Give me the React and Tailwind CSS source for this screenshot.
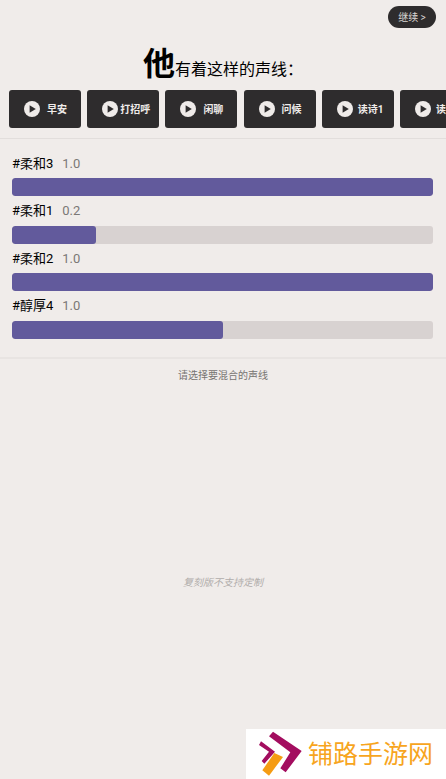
const voices = [
  { name: "早安", gap: "gap-[7px]" },
  { name: "打招呼", gap: "gap-[2px]" },
  { name: "闲聊", gap: "gap-[7px]" },
  { name: "问候", gap: "gap-[7px]" },
  { name: "读诗1", gap: "gap-[5px]" },
  { name: "读诗2", gap: "gap-[5px]" },
];

const mixes = [
  { name: "#柔和3", value: "1.0", fill: "w-full" },
  { name: "#柔和1", value: "0.2", fill: "w-[20%]" },
  { name: "#柔和2", value: "1.0", fill: "w-full" },
  { name: "#醇厚4", value: "1.0", fill: "w-1/2" },
];

function PlayIcon() {
  return (
    <svg width="16" height="16" viewBox="0 0 16 16" className="shrink-0">
      <circle cx="8" cy="8" r="8" fill="#efebe9" />
      <path d="M5.6 4.2 L11.8 8 L5.6 11.8 Z" fill="#2e2c2d" />
    </svg>
  );
}

function VoiceButton({ voice }) {
  return (
    <div
      className={`w-[72px] h-[38px] shrink-0 flex items-center ${voice.gap} pl-[15px] bg-[#2e2c2d] rounded-[3px] text-[#efebe9] text-[10px] font-bold whitespace-nowrap overflow-hidden`}
    >
      <PlayIcon />
      <span>{voice.name}</span>
    </div>
  );
}

function MixRow({ mix }) {
  return (
    <div className="h-[47.6px]">
      <div className="h-[20px] flex items-center pl-[12px] gap-[9px] text-[13px] leading-none">
        <span className="text-black">{mix.name}</span>
        <span className="text-[#7b7876]">{mix.value}</span>
      </div>
      <div className="mt-[5px] ml-[12px] mr-[13px] h-[18px] bg-[#d8d2d1] rounded-[3px] overflow-hidden">
        <div className={`h-full ${mix.fill} bg-[#625a9c] rounded-[3px]`} />
      </div>
    </div>
  );
}

function Logo() {
  return (
    <svg width="50" height="50" viewBox="0 0 150 150" className="shrink-0">
      <path d="M42 22 L54 8 L140 66 L92 130 L76 118 L106 70 Z" fill="#a30d5f" />
      <path d="M12 48 L18 37 L60 68 L28 104 L20 96 L42 68 Z" fill="#a30d5f" />
      <path d="M22 124 L58 72 L84 84 L42 140 Z" fill="#f59c13" />
    </svg>
  );
}

export default function App() {
  return (
    <div
      className="relative w-[446px] h-[779px] overflow-hidden bg-[#f0ecea] flex flex-col"
      style={{ fontFamily: "Roboto, 'Noto Sans CJK SC', sans-serif" }}
    >
      <div className="h-[42px] pt-[6px] pr-[10px] flex justify-end">
        <div className="w-[48px] h-[22px] rounded-full bg-[#2e2c2d] text-[#d9d5d3] text-[10px] flex items-center justify-center">
          继续 &gt;
        </div>
      </div>

      <div className="h-[38px] flex items-end justify-center text-black leading-none">
        <span className="text-[32px] font-bold">他</span>
        <span className="text-[16px] pb-[2px]">有着这样的声线：</span>
      </div>

      <div className="mt-[10px] pl-[9px] flex gap-[6.2px] overflow-hidden">
        {voices.map((v) => (
          <VoiceButton key={v.name} voice={v} />
        ))}
      </div>

      <div className="mt-[10px] h-px bg-[#e2dedc]" />

      <div className="pt-[14px] h-[220px] border-b-2 border-[#e8e4e2]">
        {mixes.map((m) => (
          <MixRow key={m.name} mix={m} />
        ))}
      </div>

      <div className="mt-[10px] text-center text-[10px] leading-[14px] text-[#777472]">
        请选择要混合的声线
      </div>

      <div className="mt-[193px] text-center text-[10px] leading-[14px] italic text-[#b0adab]">
        复刻版不支持定制
      </div>

      <div className="absolute right-0 bottom-0 w-[200px] h-[50px] bg-white flex items-center pl-[9px] gap-[3px]">
        <Logo />
        <span className="text-[25px] leading-none text-[#f7a51e] whitespace-nowrap pt-[1px]">铺路手游网</span>
      </div>
    </div>
  );
}
